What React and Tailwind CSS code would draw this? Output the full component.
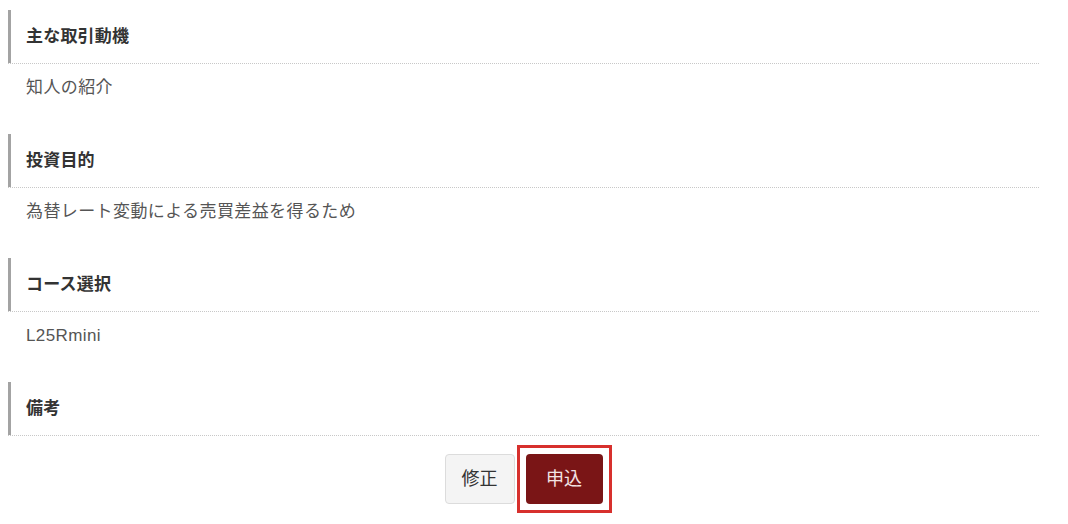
import React from 'react';

const secciones = [
  { titulo: '主な取引動機', valor: '知人の紹介' },
  { titulo: '投資目的', valor: '為替レート変動による売買差益を得るため' },
  { titulo: 'コース選択', valor: 'L25Rmini' },
  { titulo: '備考', valor: '' },
];

const App = () => {
  return (
    <div className="min-h-screen bg-white font-['Liberation_Sans','Noto_Sans_CJK_JP',sans-serif]">
      <div className="ml-2 w-[1031px] pt-[10px]">
        {secciones.map((s, i) => (
          <div key={i} className={i < secciones.length - 1 ? 'mb-[22px]' : ''}>
            <div className="h-[53px] flex items-center border-l-[3px] border-[#a3a3a3] pl-[15px]">
              <span className="text-[17px] font-bold text-[#333] tracking-[0.2px]">{s.titulo}</span>
            </div>
            <div className="border-t border-dotted border-[#c8c8c8]" />
            {s.valor !== '' && (
              <div className="h-[48px] flex items-center pl-[18px]">
                <span className="text-[17px] text-[#555] tracking-[0.4px]">{s.valor}</span>
              </div>
            )}
          </div>
        ))}

        {/* BOTONES */}
        <div className="flex justify-center gap-[11px] mt-[18px]">
          <button className="w-[70px] h-[50px] bg-[#f4f4f4] border border-[#dcdcdc] rounded-[4px] text-[18px] text-[#333]">修正</button>
          <button className="relative w-[77px] h-[50px] bg-[#7a1516] rounded-[4px] text-[18px] text-[#f3e4e4]">
            申込
            <span className="absolute -inset-[9px] border-[3px] border-[#d7302d] pointer-events-none" />
          </button>
        </div>
      </div>
    </div>
  );
};

export default App;
